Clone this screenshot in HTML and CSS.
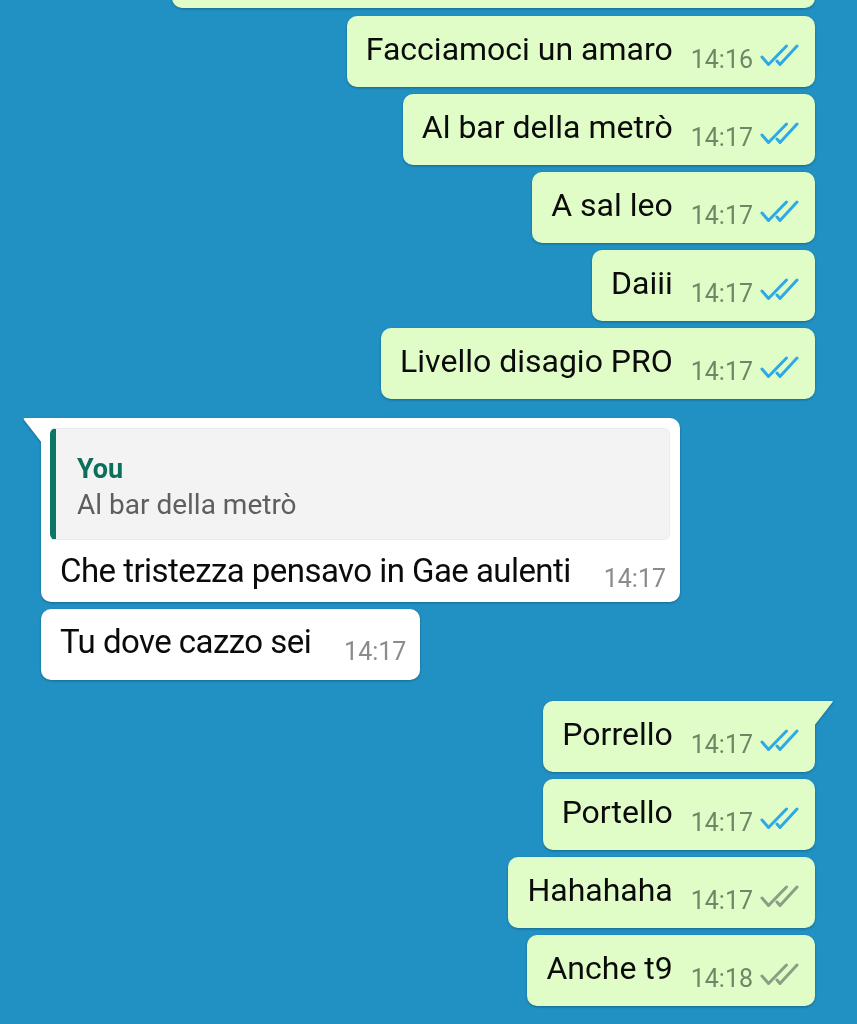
FILE: index.html
```html
<!DOCTYPE html>
<html>
<head>
    <meta charset="utf-8"/>
    <title>Chat</title>
    <link rel="stylesheet" href="styles.css">
</head>
<body>
<div class="chat">
    <div class="msg out cut"></div>
    <div class="msg out">
        <div class="line"><span class="text">Facciamoci un amaro</span><span class="time">14:16</span><svg class="tick read" viewBox="0 0 40 24"><path d="M3 13 L9.5 20.5 L27.5 2 M18 17 L21 20.5 L38 2"/></svg></div>
    </div>
    <div class="msg out">
        <div class="line"><span class="text">Al bar della metrò</span><span class="time">14:17</span><svg class="tick read" viewBox="0 0 40 24"><path d="M3 13 L9.5 20.5 L27.5 2 M18 17 L21 20.5 L38 2"/></svg></div>
    </div>
    <div class="msg out">
        <div class="line"><span class="text">A sal leo</span><span class="time">14:17</span><svg class="tick read" viewBox="0 0 40 24"><path d="M3 13 L9.5 20.5 L27.5 2 M18 17 L21 20.5 L38 2"/></svg></div>
    </div>
    <div class="msg out">
        <div class="line"><span class="text">Daiii</span><span class="time">14:17</span><svg class="tick read" viewBox="0 0 40 24"><path d="M3 13 L9.5 20.5 L27.5 2 M18 17 L21 20.5 L38 2"/></svg></div>
    </div>
    <div class="msg out">
        <div class="line"><span class="text">Livello disagio PRO</span><span class="time">14:17</span><svg class="tick read" viewBox="0 0 40 24"><path d="M3 13 L9.5 20.5 L27.5 2 M18 17 L21 20.5 L38 2"/></svg></div>
    </div>

    <div class="msg in tail group">
        <div class="quote">
            <div class="quote-name">You</div>
            <div class="quote-text">Al bar della metrò</div>
        </div>
        <div class="line reply"><span class="text">Che tristezza pensavo in Gae aulenti</span><span class="time">14:17</span></div>
    </div>
    <div class="msg in">
        <div class="line"><span class="text">Tu dove cazzo sei</span><span class="time">14:17</span></div>
    </div>

    <div class="msg out tail group">
        <div class="line"><span class="text">Porrello</span><span class="time">14:17</span><svg class="tick read" viewBox="0 0 40 24"><path d="M3 13 L9.5 20.5 L27.5 2 M18 17 L21 20.5 L38 2"/></svg></div>
    </div>
    <div class="msg out">
        <div class="line"><span class="text">Portello</span><span class="time">14:17</span><svg class="tick read" viewBox="0 0 40 24"><path d="M3 13 L9.5 20.5 L27.5 2 M18 17 L21 20.5 L38 2"/></svg></div>
    </div>
    <div class="msg out">
        <div class="line"><span class="text">Hahahaha</span><span class="time">14:17</span><svg class="tick" viewBox="0 0 40 24"><path d="M3 13 L9.5 20.5 L27.5 2 M18 17 L21 20.5 L38 2"/></svg></div>
    </div>
    <div class="msg out">
        <div class="line"><span class="text">Anche t9</span><span class="time">14:18</span><svg class="tick" viewBox="0 0 40 24"><path d="M3 13 L9.5 20.5 L27.5 2 M18 17 L21 20.5 L38 2"/></svg></div>
    </div>
</div>
</body>
</html>
```

FILE: styles.css
```css
html,body{margin:0;padding:0;}
body{background:#2190c3;font-family:Roboto,"Noto Sans",sans-serif;color:#0b0b0b;overflow:hidden;height:1024px;}

.chat{display:flex;flex-direction:column;gap:7px;padding:0 42px 0 41px;}

/* bubbles */
.msg{position:relative;display:flex;flex-direction:column;border-radius:10px;filter:drop-shadow(0 1px 1px rgba(0,0,0,0.28));}
.msg.out{align-self:flex-end;background:#e0fdc8;}
.msg.in{align-self:flex-start;background:#fff;}
.msg.group{margin-top:12px;}
.msg.out.group{margin-top:14px;}
.msg.cut{width:643px;height:71px;margin-top:-63px;margin-bottom:1px;}

/* tails */
.msg.tail.in{border-top-left-radius:0;}
.msg.tail.out{border-top-right-radius:0;}
.msg.tail:before{content:'';position:absolute;top:0;width:19px;height:25px;}
.msg.tail.in:before{left:-18px;background:#fff;clip-path:polygon(0 0,100% 0,100% 100%,6% 8%);border-top-left-radius:2px;}
.msg.tail.out:before{right:-18px;background:#e0fdc8;clip-path:polygon(0 0,100% 0,94% 8%,0 100%);}

/* line of text + time + ticks */
.line{display:flex;align-items:flex-start;height:36px;padding:15px 16px 20px 19px;}
.text{font-size:32px;line-height:36px;white-space:nowrap;}
.time{font-size:25px;line-height:28px;margin-top:15px;margin-left:18px;color:#6e8867;white-space:nowrap;}
.tick{width:40px;height:24px;margin-top:13px;margin-left:6px;fill:none;stroke:#8a9f83;stroke-width:3;stroke-linecap:round;stroke-linejoin:round;}
.tick.read{stroke:#2fa9e6;}

.msg.in .line{padding:15px 14px 20px 19px;}
.msg.in .text{font-size:33px;letter-spacing:-0.55px;}
.msg.in .time{color:#8b8b8b;margin-left:33px;margin-top:14px;letter-spacing:0;}

/* quoted reply */
.quote{margin:10px 10px 0 9px;background:#f3f3f3;border:1px solid #ececec;border-left:6px solid #0b7763;border-radius:6px;padding:23px 20px 16px 21px;}
.quote-name{font-size:27px;line-height:34px;font-weight:700;color:#0b6f5c;}
.quote-text{font-size:28px;line-height:37px;color:#5e5e5e;}
.msg.in .line.reply{padding:13px 14px 13px 19px;}
.msg.in .line.reply .time{margin-top:12px;}
```
